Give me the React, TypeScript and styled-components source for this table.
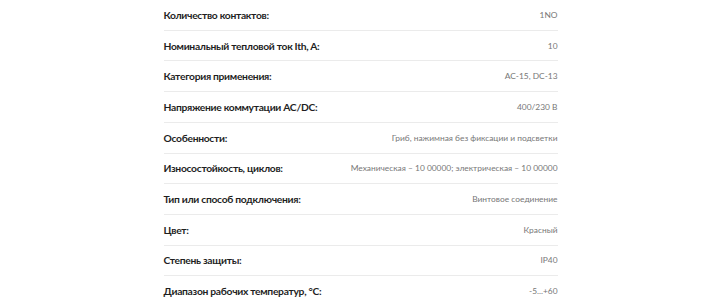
import React from 'react'
import styled, { createGlobalStyle } from 'styled-components'

const GlobalStyle = createGlobalStyle`
  html, body {
    margin: 0;
    padding: 0;
    background: #fff;
  }
`

const Page = styled.div`
  width: 720px;
  height: 306px;
  overflow: hidden;
  display: flex;
  justify-content: center;
  background: #fff;
`

const Table = styled.div`
  width: 394px;
  margin-left: 1px;
  display: flex;
  flex-direction: column;
`

const Row = styled.div<{ $last?: boolean }>`
  display: flex;
  align-items: center;
  justify-content: space-between;
  height: 30px;
  border-bottom: ${p => (p.$last ? 'none' : '1px solid #ebebeb')};
  box-sizing: content-box;
  font-family: Lato, 'Noto Sans', sans-serif;
`

const Label = styled.span`
  font-size: 10.3px;
  font-weight: 700;
  color: #1f1f1f;
  letter-spacing: -0.3px;
`

const Value = styled.span`
  font-size: 8.4px;
  color: #777;
  text-align: right;
`

const specs: [string, string][] = [
  ['Количество контактов:', '1NO'],
  ['Номинальный тепловой ток Ith, A:', '10'],
  ['Категория применения:', 'AC-15, DC-13'],
  ['Напряжение коммутации AC/DC:', '400/230 В'],
  ['Особенности:', 'Гриб, нажимная без фиксации и подсветки'],
  ['Износостойкость, циклов:', 'Механическая – 10 00000; электрическая – 10 00000'],
  ['Тип или способ подключения:', 'Винтовое соединение'],
  ['Цвет:', 'Красный'],
  ['Степень защиты:', 'IP40'],
  ['Диапазон рабочих температур, °C:', '-5...+60']
]

export default function App() {
  return (
    <Page>
      <GlobalStyle />
      <Table>
        {specs.map(([label, value], i) => (
          <Row key={label} $last={i === specs.length - 1}>
            <Label>{label}</Label>
            <Value>{value}</Value>
          </Row>
        ))}
      </Table>
    </Page>
  )
}
